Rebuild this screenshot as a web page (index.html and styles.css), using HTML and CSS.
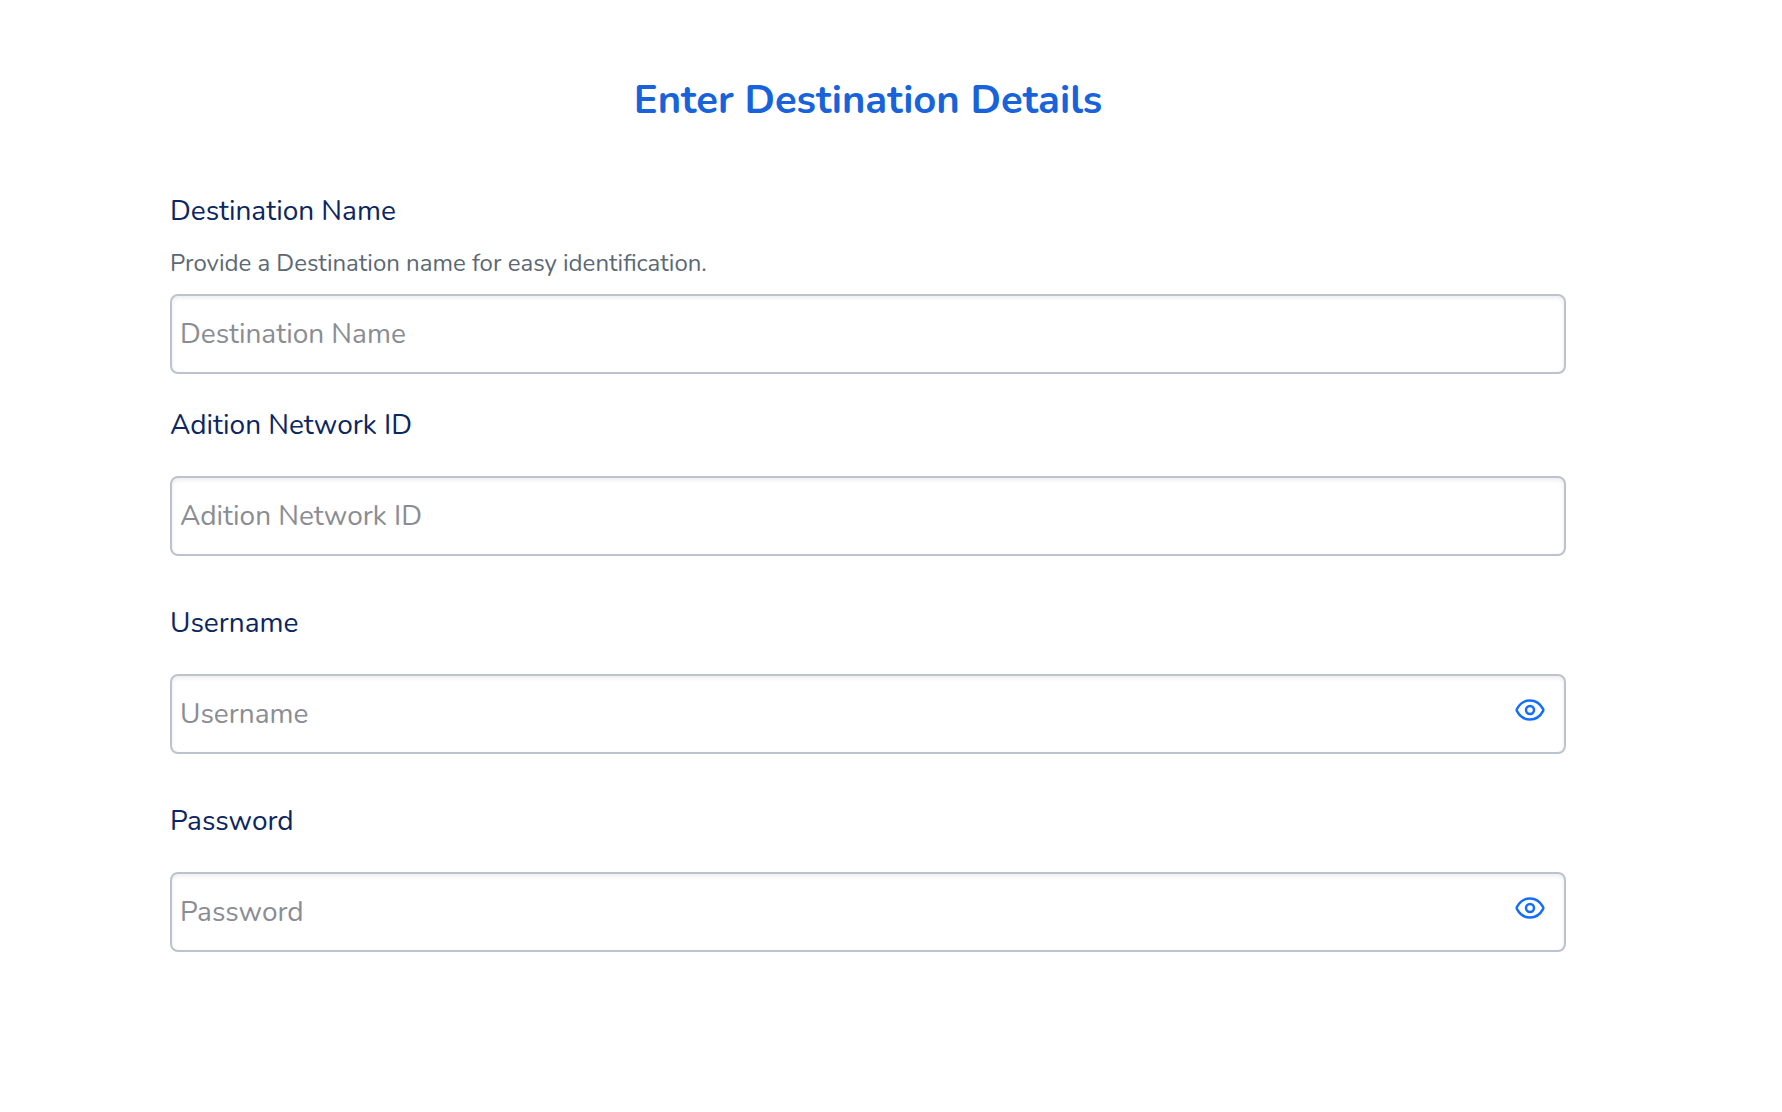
FILE: index.html
```html
<!DOCTYPE html>
<html lang="en">
<head>
    <meta charset="UTF-8">
    <meta name="viewport" content="width=device-width, initial-scale=1.0">
    <title>Enter Destination Details</title>
    <link rel="stylesheet" href="styles.css">
</head>
<body>
    <main class="container">
        <h1 class="title">Enter Destination Details</h1>
        <form class="form">
            <div class="field field-with-help">
                <label class="label" for="destinationName">Destination Name</label>
                <p class="help" id="destinationHelp">Provide a Destination name for easy identification.</p>
                <input class="input" type="text" id="destinationName" placeholder="Destination Name" aria-describedby="destinationHelp">
            </div>
            <div class="field">
                <label class="label" for="networkId">Adition Network ID</label>
                <input class="input" type="text" id="networkId" placeholder="Adition Network ID">
            </div>
            <div class="field">
                <label class="label" for="username">Username</label>
                <div class="input-wrap">
                    <input class="input input-secret" type="password" id="username" placeholder="Username">
                    <button class="toggle" type="button" aria-label="Show username" onclick="toggleField('username')">
                        <svg class="icon" viewBox="0 0 32 32" fill="none" stroke="currentColor" stroke-width="2.5" stroke-linejoin="round">
                            <path d="M3 17.2Q2.4 16 3 14.8C5.8 9.6 10.4 6.4 16 6.4S26.2 9.6 29 14.8Q29.6 16 29 17.2C26.2 22.4 21.6 25.6 16 25.6S5.8 22.4 3 17.2Z"></path>
                            <circle cx="16" cy="16" r="4"></circle>
                        </svg>
                    </button>
                </div>
            </div>
            <div class="field">
                <label class="label" for="password">Password</label>
                <div class="input-wrap">
                    <input class="input input-secret" type="password" id="password" placeholder="Password">
                    <button class="toggle" type="button" aria-label="Show password" onclick="toggleField('password')">
                        <svg class="icon" viewBox="0 0 32 32" fill="none" stroke="currentColor" stroke-width="2.5" stroke-linejoin="round">
                            <path d="M3 17.2Q2.4 16 3 14.8C5.8 9.6 10.4 6.4 16 6.4S26.2 9.6 29 14.8Q29.6 16 29 17.2C26.2 22.4 21.6 25.6 16 25.6S5.8 22.4 3 17.2Z"></path>
                            <circle cx="16" cy="16" r="4"></circle>
                        </svg>
                    </button>
                </div>
            </div>
        </form>
    </main>
    <script>
        function toggleField(id) {
            var field = document.getElementById(id);
            field.type = field.type === "password" ? "text" : "password";
        }
    </script>
</body>
</html>
```
FILE: styles.css
```css
* {
    box-sizing: border-box;
}
body {
    margin: 0;
    background: #fff;
    font-family: Nunito, "Noto Sans", sans-serif;
}
.container {
    padding: 70px 216px 70px 170px;
}
.title {
    margin: 0 0 60px;
    font-size: 40px;
    line-height: 60px;
    font-weight: 700;
    text-align: center;
    color: #1863dc;
}
.form {
    display: flex;
    flex-direction: column;
    gap: 46px;
}
.field {
    display: flex;
    flex-direction: column;
    gap: 30px;
}
.field-with-help {
    gap: 14px;
    margin-bottom: -16px;
}
.label {
    font-size: 28px;
    line-height: 42px;
    color: #0b2660;
}
.help {
    margin: 0;
    font-size: 24px;
    line-height: 34px;
    color: #5c6873;
}
.input {
    width: 100%;
    height: 80px;
    padding: 0 8px;
    border: 2px solid #bcc3ce;
    border-radius: 8px;
    background: #fff;
    box-shadow: inset 0 2px 4px rgba(0, 0, 0, 0.08);
    font-family: inherit;
    font-size: 28px;
    color: #0b2660;
}
.input::placeholder {
    color: #8a8d93;
    opacity: 1;
}
.input-secret {
    padding-right: 64px;
}
.input-wrap {
    position: relative;
    display: flex;
}
/* eye button over the right end of the input */
.toggle {
    position: absolute;
    top: 20px;
    right: 20px;
    display: flex;
    padding: 0;
    border: none;
    background: none;
    color: #146ff8;
    cursor: pointer;
}
.icon {
    width: 32px;
    height: 32px;
}
```
